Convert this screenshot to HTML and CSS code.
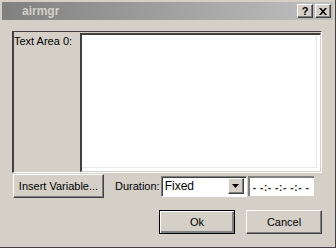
FILE: index.html
```html
<!DOCTYPE html>
<html lang="en">
<head>
    <meta charset="UTF-8">
    <title>airmgr</title>
    <link rel="stylesheet" href="styles.css">
</head>
<body>
    <div class="window">
        <div class="titlebar">
            <span class="title">airmgr</span>
            <div class="title-buttons">
                <span class="tbtn">?</span>
                <span class="tbtn close">
                    <svg width="8" height="7" viewBox="0 0 8 7"><path d="M0 0h2l2 2.2L6 0h2L5 3.5 8 7H6L4 4.8 2 7H0l3-3.5z" fill="#000"/></svg>
                </span>
            </div>
        </div>

        <div class="content">
            <div class="editor">
                <div class="editor-label">Text Area 0:</div>
                <div class="editor-text"></div>
            </div>

            <div class="tool-row">
                <button class="btn insert">Insert Variable...</button>
                <span class="dur-label">Duration:</span>
                <div class="select">
                    <span class="select-value">Fixed</span>
                    <span class="select-arrow">
                        <svg width="7" height="4" viewBox="0 0 7 4"><path d="M0 0h7L3.5 4z" fill="#000"/></svg>
                    </span>
                </div>
                <div class="time-field">- -:- -:- -:- -</div>
            </div>

            <div class="button-row">
                <button class="btn default">Ok</button>
                <button class="btn">Cancel</button>
            </div>
        </div>
    </div>
</body>
</html>
```

FILE: styles.css
```css
:root {
    --face: #d4d0c8;
    --shadow: #808080;
    --dark: #404040;
}

* {
    margin: 0;
    padding: 0;
    box-sizing: border-box;
    font-family: 'Liberation Sans', Arial, sans-serif;
}

body {
    background-color: var(--face);
}

.window {
    width: 336px;
    height: 248px;
    padding: 2px;
    background-color: var(--face);
    border-right: 1px solid var(--dark);
    border-bottom: 1px solid var(--dark);
    display: flex;
    flex-direction: column;
}

.titlebar {
    height: 18px;
    display: flex;
    align-items: center;
    justify-content: space-between;
    background: linear-gradient(to right, #808080, #c0c0c0);
    padding: 0 2px 0 20px;
}

.title {
    color: var(--face);
    font-size: 12px;
    font-weight: bold;
}

.title-buttons {
    display: flex;
    gap: 2px;
}

.tbtn {
    width: 16px;
    height: 14px;
    display: flex;
    align-items: center;
    justify-content: center;
    background-color: var(--face);
    border-top: 1px solid #fff;
    border-left: 1px solid #fff;
    border-right: 1px solid var(--dark);
    border-bottom: 1px solid var(--dark);
    box-shadow: inset -1px -1px 0 var(--shadow);
    font-size: 11px;
    font-weight: bold;
    line-height: 1;
    color: #000;
}

.content {
    padding: 11px 11px 0 10px;
    display: flex;
    flex-direction: column;
}

.editor {
    height: 142px;
    display: flex;
    border-top: 1px solid var(--dark);
    border-left: 2px solid var(--dark);
    border-right: 1px solid #fff;
    border-bottom: 1px solid #fff;
}

.editor-label {
    width: 66px;
    padding-top: 3px;
    font-size: 11px;
    color: #000;
}

.editor-text {
    flex: 1;
    margin-top: 1px;
    background-color: #fff;
    border-top: 2px solid var(--dark);
    border-left: 2px solid var(--dark);
    border-right: 1px solid var(--face);
    border-bottom: 1px solid var(--face);
    box-shadow: inset -3px -3px 0 #fff, inset -4px -4px 0 #e8e8e8;
}

.btn {
    height: 24px;
    background-color: var(--face);
    border-top: 1px solid #fff;
    border-left: 1px solid #fff;
    border-right: 1px solid var(--dark);
    border-bottom: 1px solid var(--dark);
    box-shadow: inset -1px -1px 0 var(--shadow);
    font-size: 11px;
    color: #000;
}

.btn.default {
    border: 1px solid #000;
    box-shadow: inset 1px 1px 0 #fff, inset -2px -2px 0 var(--shadow);
}

.tool-row {
    display: flex;
    align-items: center;
    margin-top: 1px;
    padding-left: 1px;
}

.insert {
    width: 91px;
}

.dur-label {
    margin-left: 11px;
    font-size: 11px;
    color: #000;
}

.select {
    width: 86px;
    height: 21px;
    margin-left: 1px;
    display: flex;
    align-items: center;
    background-color: #fff;
    border-top: 1px solid var(--shadow);
    border-left: 1px solid var(--shadow);
    border-right: 1px solid #fff;
    border-bottom: 1px solid #fff;
    box-shadow: inset 1px 1px 0 var(--dark);
    padding: 2px 2px 2px 3px;
}

.select-value {
    flex: 1;
    font-size: 12px;
    color: #000;
}

.select-arrow {
    width: 16px;
    height: 16px;
    display: flex;
    align-items: center;
    justify-content: center;
    background-color: var(--face);
    border-top: 1px solid #fff;
    border-left: 1px solid #fff;
    border-right: 1px solid var(--dark);
    border-bottom: 1px solid var(--dark);
    box-shadow: inset -1px -1px 0 var(--shadow);
}

.time-field {
    width: 66px;
    height: 20px;
    margin-left: 1px;
    display: flex;
    align-items: center;
    padding-left: 3px;
    background-color: #fff;
    border-top: 2px solid var(--shadow);
    border-left: 2px solid var(--shadow);
    font-size: 10px;
    font-weight: bold;
    color: #222;
    letter-spacing: 0.6px;
}

.button-row {
    display: flex;
    justify-content: flex-end;
    gap: 11px;
    margin-top: 12px;
}

.button-row .btn {
    width: 76px;
}
```
